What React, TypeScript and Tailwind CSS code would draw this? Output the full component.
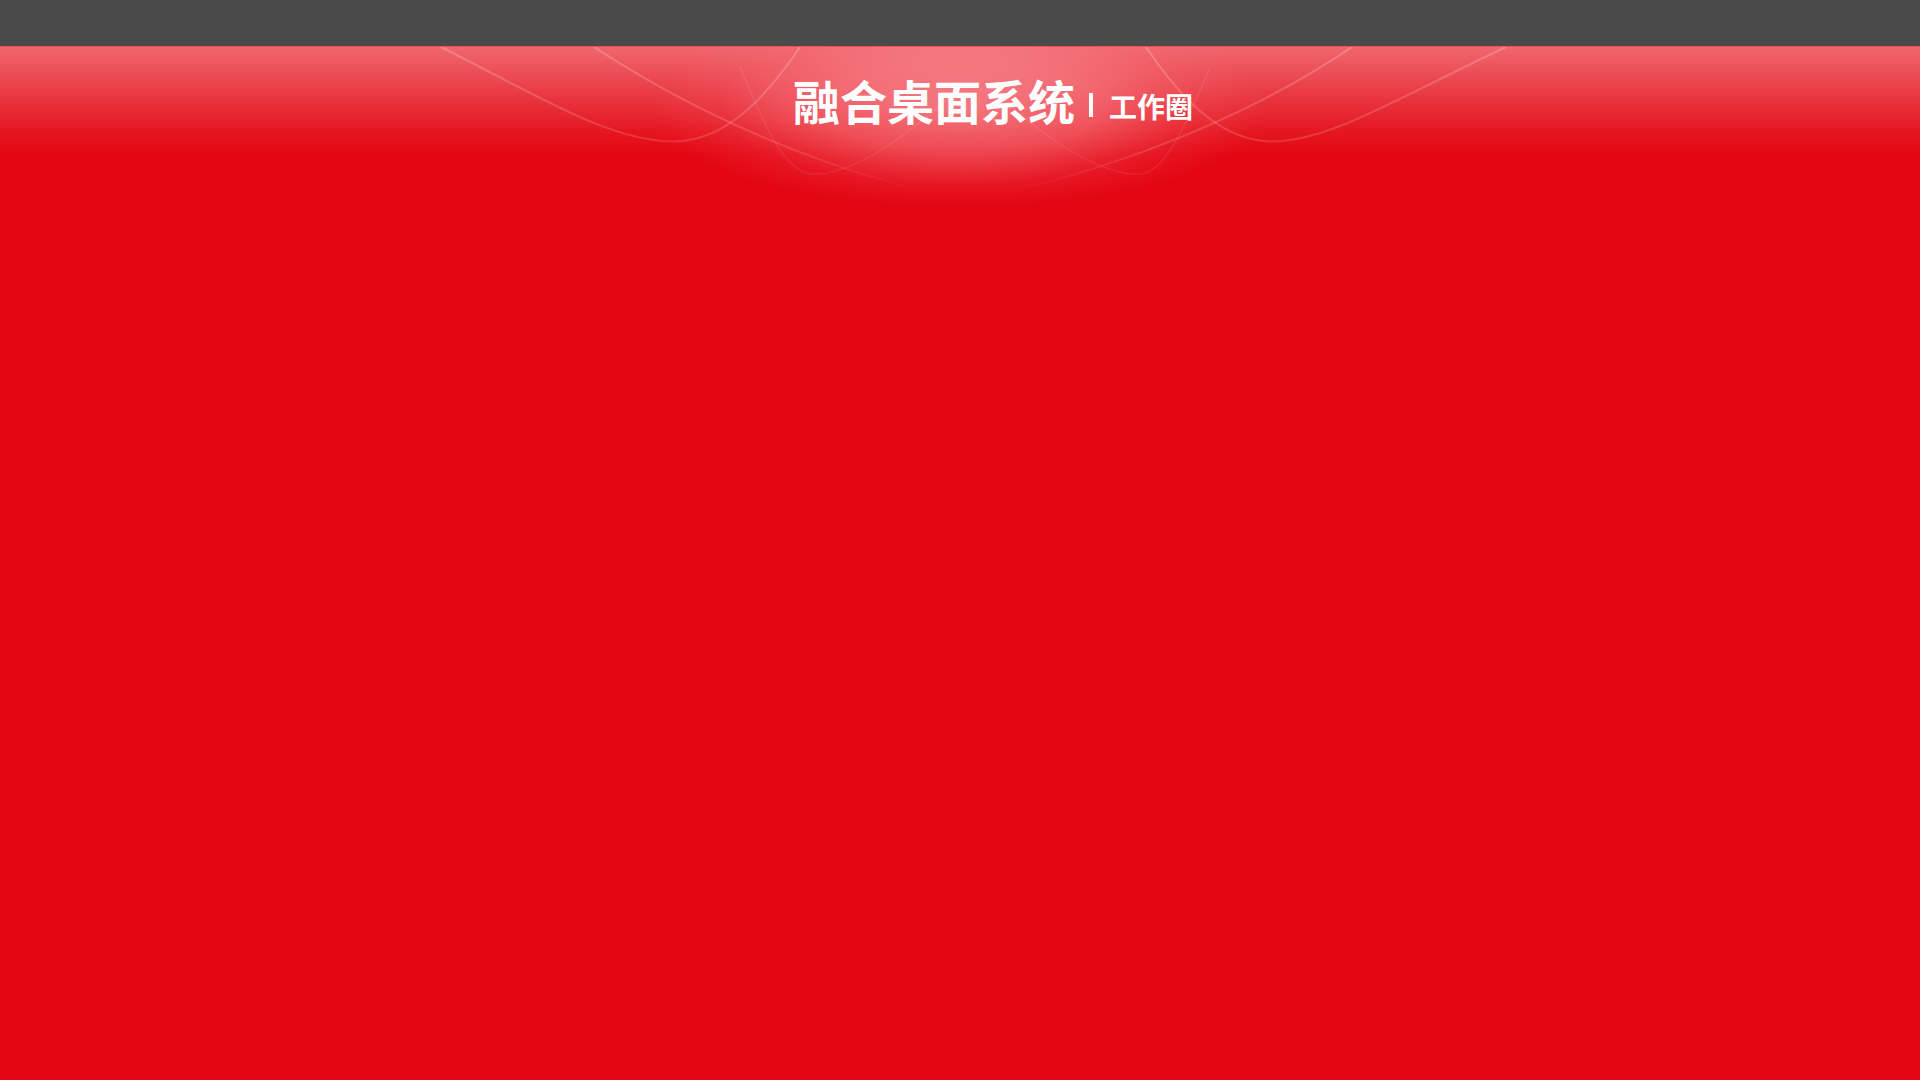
export default function App() {
  return (
    <div className="min-h-screen w-full bg-[#e30713] font-['Noto_Sans_CJK_SC',sans-serif]">
      {/* top bar */}
      <div className="h-[46px] bg-[#4a4a4a]" />

      {/* header band */}
      <div className="relative h-[170px] overflow-hidden border-t border-[#f0525a] bg-[linear-gradient(to_bottom,#f0666d_0px,#ec4a52_30px,#e82f39_58px,#e5161f_85px,#e30713_108px)]">
        {/* soft glow behind the title */}
        <div className="absolute left-1/2 top-[-40px] h-[200px] w-[620px] -translate-x-1/2 bg-[radial-gradient(ellipse_closest-side_at_center,rgba(255,180,188,0.55)_0%,rgba(255,165,172,0.4)_45%,rgba(255,140,150,0.12)_78%,rgba(255,140,150,0)_100%)]" />

        {/* wave lines */}
        <svg className="absolute inset-0 h-full w-full" viewBox="0 0 1920 170" preserveAspectRatio="none" fill="none">
          <defs>
            <linearGradient id="fade" x1="0" y1="0" x2="0" y2="145" gradientUnits="userSpaceOnUse">
              <stop offset="0" stopColor="#fff" stopOpacity="0.2" />
              <stop offset="0.7" stopColor="#fff" stopOpacity="0.14" />
              <stop offset="1" stopColor="#fff" stopOpacity="0" />
            </linearGradient>
          </defs>
          <g stroke="url(#fade)" strokeWidth="2">
            <path d="M441 0 C540 50 610 95 674 95 C720 95 760 60 800 0" />
            <path d="M1506 0 C1400 50 1330 95 1272 95 C1226 95 1186 60 1146 0" />
            <path d="M594 0 C700 70 820 120 925 145" />
            <path d="M1352 0 C1250 70 1120 120 1010 145" />
          </g>
          <g stroke="rgba(255,255,255,0.08)" strokeWidth="1.5">
            <path d="M740 20 C765 80 785 128 814 128 C850 128 900 95 950 50" />
            <path d="M1210 20 C1185 80 1165 128 1138 128 C1100 128 1050 95 1000 50" />
          </g>
        </svg>

        {/* title */}
        <div className="relative flex items-end justify-center pl-[66px] pt-[29px]">
          <span className="text-[47px] font-bold leading-none text-white">融合桌面系统</span>
          <span className="mb-[6px] ml-[14px] h-[24px] w-[4px] bg-white" />
          <span className="mb-[3px] ml-[16px] text-[28px] font-bold leading-none text-white">工作圈</span>
        </div>
      </div>
    </div>
  );
}
